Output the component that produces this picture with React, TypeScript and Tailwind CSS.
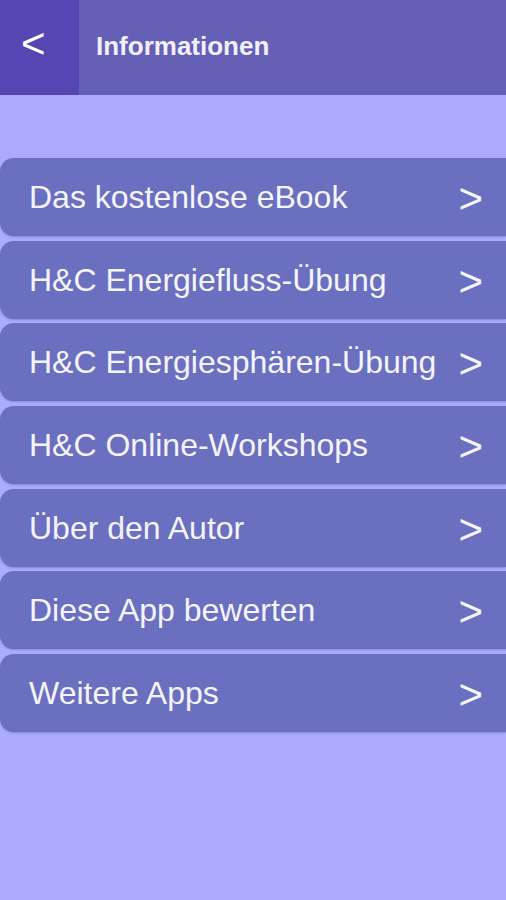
const items = [
  'Das kostenlose eBook',
  'H&C Energiefluss-Übung',
  'H&C Energiesphären-Übung',
  'H&C Online-Workshops',
  'Über den Autor',
  'Diese App bewerten',
  'Weitere Apps',
];

export default function App() {
  return (
    <main
      className="min-h-[900px] w-full bg-[#aaabfc]"
      style={{ fontFamily: '"Liberation Sans", Arial, sans-serif' }}
    >
      <header className="flex h-[95px] bg-[#665fb6]">
        <button className="flex w-[79px] items-center bg-[#5646b4] pb-[8px] pl-[21px] text-[42px] leading-none text-white">
          &lt;
        </button>
        <h1 className="flex items-center pb-[2px] pl-[17px] text-[26px] font-bold text-[#f2f0fb]">
          Informationen
        </h1>
      </header>

      <ul className="flex flex-col gap-[4.67px] pt-[63px]">
        {items.map((label) => (
          <li
            key={label}
            className="flex h-[78px] items-center justify-between rounded-l-[14px] bg-[#6b6fc0] pl-[29px] pr-[23px] text-[32px] text-[#f4f4fb] shadow-[0_1px_2px_rgba(60,60,140,0.35)]"
          >
            <span>{label}</span>
            <span className="pt-[4px] text-[42px] leading-none">&gt;</span>
          </li>
        ))}
      </ul>
    </main>
  );
}
